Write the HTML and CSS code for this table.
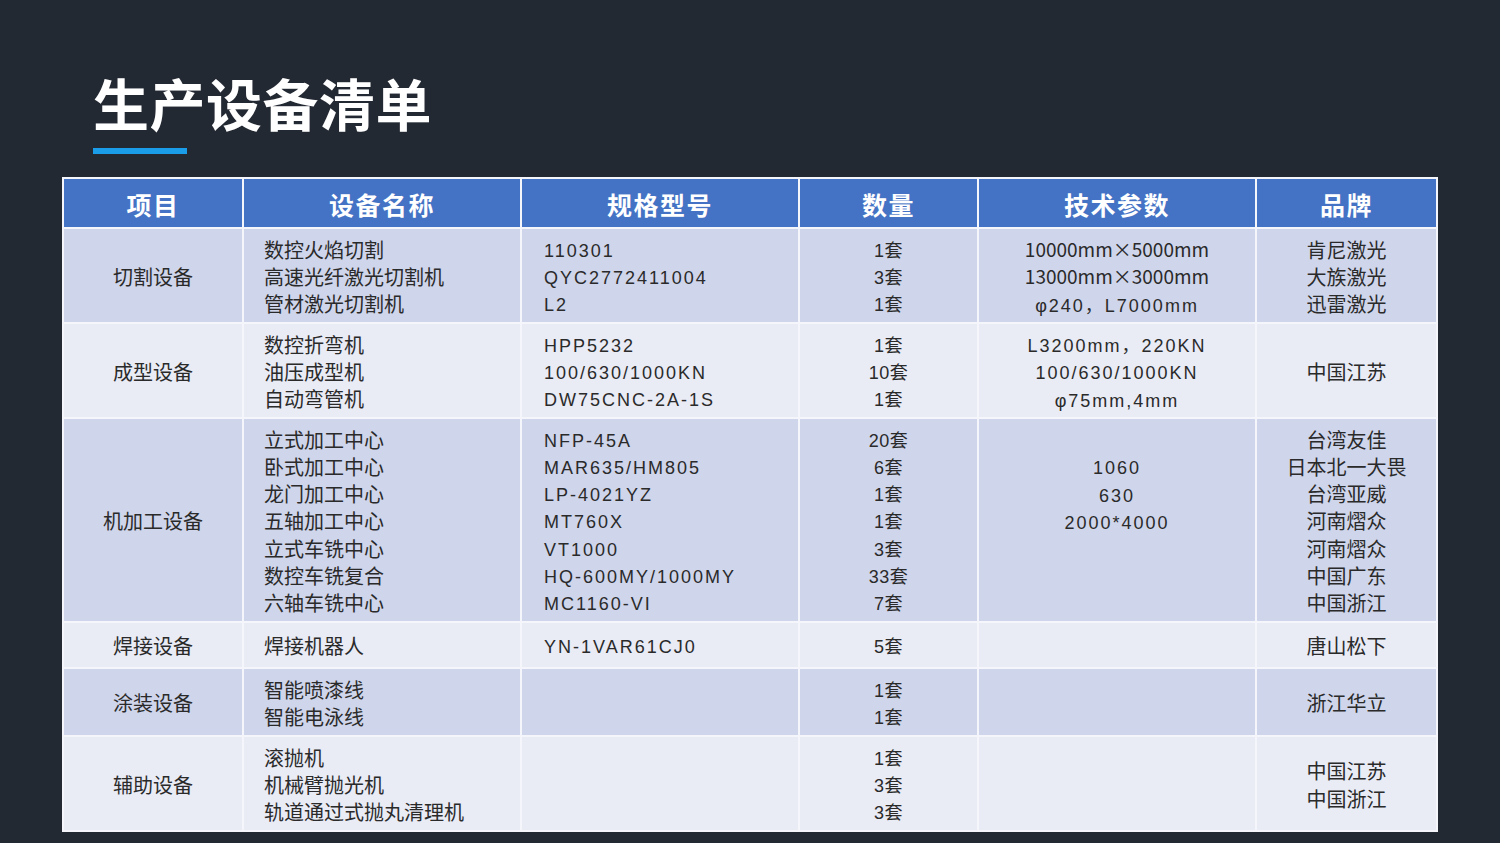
FILE: index.html
```html
<!DOCTYPE html>
<html lang="zh-CN">
<head>
<meta charset="utf-8">
<title>生产设备清单</title>
<link rel="stylesheet" href="styles.css">
</head>
<body>
<div class="page">
  <header class="head">
    <h1 class="title">生产设备清单</h1>
    <div class="bar"></div>
  </header>
  <table class="equip">
    <colgroup>
      <col class="c1"><col class="c2"><col class="c3"><col class="c4"><col class="c5"><col class="c6">
    </colgroup>
    <thead>
      <tr class="r-head">
        <th>项目</th><th>设备名称</th><th>规格型号</th><th>数量</th><th>技术参数</th><th>品牌</th>
      </tr>
    </thead>
    <tbody>
      <tr class="dark r95">
        <td class="cat">切割设备</td>
        <td class="name">数控火焰切割<br>高速光纤激光切割机<br>管材激光切割机</td>
        <td class="model">110301<br>QYC2772411004<br>L2</td>
        <td class="qty">1套<br>3套<br>1套</td>
        <td class="param"><span class="cjk">10000mm×5000mm</span><br><span class="cjk">13000mm×3000mm</span><br>φ240，L7000mm</td>
        <td class="brand">肯尼激光<br>大族激光<br>迅雷激光</td>
      </tr>
      <tr class="light r95">
        <td class="cat">成型设备</td>
        <td class="name">数控折弯机<br>油压成型机<br>自动弯管机</td>
        <td class="model">HPP5232<br>100/630/1000KN<br>DW75CNC-2A-1S</td>
        <td class="qty">1套<br>10套<br>1套</td>
        <td class="param">L3200mm，220KN<br>100/630/1000KN<br>φ75mm,4mm</td>
        <td class="brand">中国江苏</td>
      </tr>
      <tr class="dark r204">
        <td class="cat">机加工设备</td>
        <td class="name">立式加工中心<br>卧式加工中心<br>龙门加工中心<br>五轴加工中心<br>立式车铣中心<br>数控车铣复合<br>六轴车铣中心</td>
        <td class="model">NFP-45A<br>MAR635/HM805<br>LP-4021YZ<br>MT760X<br>VT1000<br>HQ-600MY/1000MY<br>MC1160-VI</td>
        <td class="qty">20套<br>6套<br>1套<br>1套<br>3套<br>33套<br>7套</td>
        <td class="param">&nbsp;<br>1060<br>630<br>2000*4000<br>&nbsp;<br>&nbsp;<br>&nbsp;</td>
        <td class="brand">台湾友佳<br>日本北一大畏<br>台湾亚威<br>河南熠众<br>河南熠众<br>中国广东<br>中国浙江</td>
      </tr>
      <tr class="light r46">
        <td class="cat">焊接设备</td>
        <td class="name">焊接机器人</td>
        <td class="model">YN-1VAR61CJ0</td>
        <td class="qty">5套</td>
        <td class="param"></td>
        <td class="brand">唐山松下</td>
      </tr>
      <tr class="dark r68">
        <td class="cat">涂装设备</td>
        <td class="name">智能喷漆线<br>智能电泳线</td>
        <td class="model"></td>
        <td class="qty">1套<br>1套</td>
        <td class="param"></td>
        <td class="brand">浙江华立</td>
      </tr>
      <tr class="light r95">
        <td class="cat">辅助设备</td>
        <td class="name">滚抛机<br>机械臂抛光机<br>轨道通过式抛丸清理机</td>
        <td class="model"></td>
        <td class="qty">1套<br>3套<br>3套</td>
        <td class="param"></td>
        <td class="brand">中国江苏<br>中国浙江</td>
      </tr>
    </tbody>
  </table>
</div>
</body>
</html>
```

FILE: styles.css
```css
* { box-sizing: border-box; }
html, body {
  margin: 0;
  padding: 0;
  width: 1500px;
  height: 843px;
  overflow: hidden;
  background: #232933;
}
.page {
  padding: 69px 62px 0 62px;
  font-family: "Liberation Sans", "Noto Sans CJK SC", sans-serif;
}
.head {
  padding-left: 31px;
}
.title {
  margin: 0;
  font-family: "Noto Sans CJK SC", sans-serif;
  font-weight: 700;
  font-size: 56px;
  line-height: 66px;
  color: #ffffff;
  letter-spacing: 0.5px;
}
.bar {
  margin-top: 13px;
  width: 94px;
  height: 6px;
  background: #1a9ce8;
}
.equip {
  margin-top: 23px;
  width: 1374px;
  border-collapse: collapse;
  table-layout: fixed;
  border: 2px solid #e8ebf4;
  color: #2a2a2a;
  font-size: 20px;
}
.c1 { width: 180px; }
.c2 { width: 278px; }
.c3 { width: 278px; }
.c4 { width: 179px; }
.c5 { width: 278px; }
.c6 { width: 181px; }
.equip th, .equip td {
  border: 2px solid #f4f6fb;
  padding: 0;
  vertical-align: middle;
  line-height: 27.2px;
}
.r-head th {
  height: 50px;
  background: #4472c4;
  color: #ffffff;
  font-family: "Noto Sans CJK SC", sans-serif;
  font-weight: 700;
  font-size: 25px;
  letter-spacing: 1.5px;
  text-align: center;
  padding-top: 4px;
}
.dark td { background: #cfd5ea; }
.light td { background: #e9ebf5; }
.r95 td { height: 95px; }
.r204 td { height: 204px; }
.r46 td { height: 46px; }
.r68 td { height: 68px; }
.cat {
  text-align: center;
  font-family: "Noto Sans CJK SC", sans-serif;
}
.name {
  padding-left: 20px !important;
  padding-top: 2px !important;
  font-family: "Noto Sans CJK SC", sans-serif;
}
.model {
  padding-left: 22px !important;
  padding-top: 6px !important;
  font-size: 18px;
  letter-spacing: 2px;
}
.qty {
  text-align: center;
  padding-top: 6px !important;
  font-size: 18px;
  letter-spacing: 0.5px;
}
.param {
  text-align: center;
  padding-top: 7px !important;
  font-size: 18px;
  letter-spacing: 2px;
}
.param .cjk {
  display: inline-block;
  vertical-align: top;
  height: 27.2px;
  line-height: 27.2px;
  font-family: "Noto Sans CJK SC", sans-serif;
  font-size: 19px;
  letter-spacing: 0;
  transform: translateY(-3px);
}
.brand {
  text-align: center;
  padding-top: 2px !important;
  font-family: "Noto Sans CJK SC", sans-serif;
}
.cat { padding-top: 2px !important; }
```
